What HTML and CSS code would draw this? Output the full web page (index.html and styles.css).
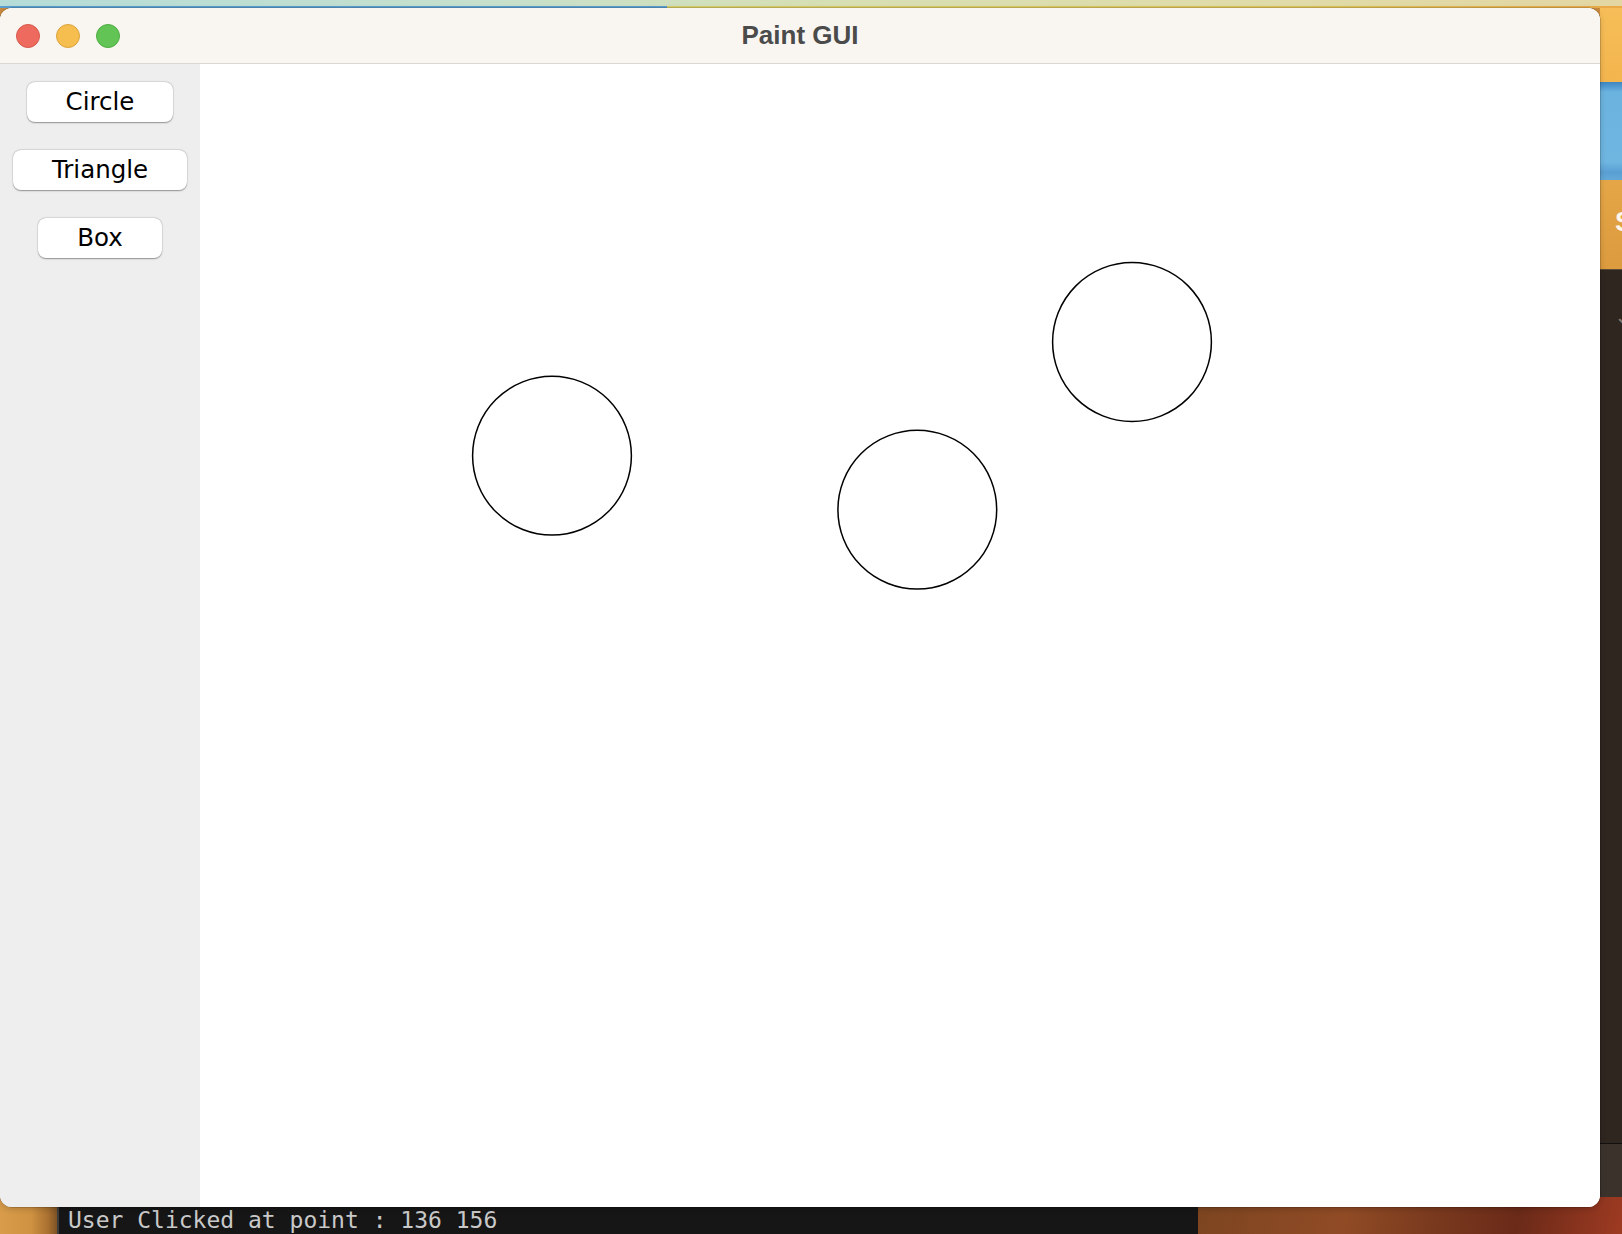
FILE: index.html
```html
<!DOCTYPE html>
<html>
<head>
<meta charset="utf-8">
<title>Paint GUI</title>
<link rel="stylesheet" href="styles.css">
</head>
<body>
<div class="desktop">
  <div class="top-strip">
    <div class="edge-blue"></div>
    <div class="edge-yellow"></div>
  </div>
  <div class="side-window">
    <div class="seg seg-yellow"></div>
    <div class="seg seg-blue"></div>
    <div class="seg seg-orange"><span class="cut-letter">S</span></div>
    <div class="seg seg-dark"><span class="cut-chev">&#8964;</span></div>
    <div class="seg seg-dark2"></div>
  </div>
  <div class="wall-left"></div>
  <div class="wall-right"></div>
  <div class="terminal">User Clicked at point : 136 156</div>

  <div class="window">
    <div class="titlebar">
      <div class="lights">
        <span class="light red"></span>
        <span class="light yellow"></span>
        <span class="light green"></span>
      </div>
      <div class="title">Paint GUI</div>
      <div></div>
    </div>
    <div class="content">
      <div class="sidebar">
        <button class="btn">Circle</button>
        <button class="btn">Triangle</button>
        <button class="btn">Box</button>
      </div>
      <div class="canvas">
        <svg class="drawing" width="1400" height="1143" viewBox="0 0 1400 1143">
          <circle cx="352" cy="391.7" r="79.4" />
          <circle cx="932" cy="278" r="79.4" />
          <circle cx="717.3" cy="445.7" r="79.4" />
        </svg>
      </div>
    </div>
  </div>
</div>
</body>
</html>
```

FILE: styles.css
```css
html, body {
  margin: 0;
  padding: 0;
}

body {
  font-family: "Liberation Sans", Arial, sans-serif;
  background: #c98a3e;
}

.desktop {
  position: relative;
  width: 1622px;
  height: 1234px;
  overflow: hidden;
  background: #c98a3e;
}

/* ---------- backdrop (other windows / wallpaper) ---------- */
.top-strip {
  position: absolute;
  left: 0;
  top: 0;
  width: 1622px;
  height: 8px;
  background: linear-gradient(90deg, #b5dcd8 0%, #c6e0cc 30%, #d6dfb4 50%, #dfdca9 75%, #e3d6a2 100%);
}

.edge-blue {
  position: absolute;
  left: 0;
  top: 6px;
  width: 667px;
  height: 2px;
  background: #5b9fcf;
}

.edge-yellow {
  position: absolute;
  left: 667px;
  top: 6px;
  width: 955px;
  height: 2px;
  background: linear-gradient(90deg, #d9cf6a 0%, #e0c45a 70%, #e9a949 100%);
}

.side-window {
  position: absolute;
  left: 1600px;
  top: 8px;
  width: 22px;
  height: 1189px;
  display: flex;
  flex-direction: column;
  overflow: hidden;
}

.seg {
  flex: none;
  overflow: hidden;
  position: relative;
}

.seg-yellow {
  height: 74px;
  background: linear-gradient(180deg, #f6be58 0%, #f3b54e 100%);
}

.seg-blue {
  height: 98px;
  background: linear-gradient(180deg, #3f86c2 0px, #4e97cf 4px, #6bb3df 10px, #6fb6e1 80px, #5a9fd2 90px, #63a8d8 98px);
}

.seg-orange {
  height: 89px;
  background: linear-gradient(180deg, #e4a647 0%, #dc9b3e 100%);
  border-bottom: 1px solid #5d4a38;
}

.cut-letter {
  position: absolute;
  left: 15px;
  top: 29px;
  font-family: "Liberation Sans", Arial, sans-serif;
  font-weight: bold;
  font-size: 27px;
  color: #fdf6ea;
  line-height: 1;
}

.cut-chev {
  position: absolute;
  left: 14px;
  top: 36px;
  font-size: 22px;
  color: #8a7d74;
  line-height: 1;
}

.seg-dark {
  height: 873px;
  background: #2f2620;
  border-bottom: 1px solid #121110;
}

.seg-dark2 {
  height: 53px;
  background: #3b322c;
}

.wall-left {
  position: absolute;
  left: 0;
  top: 1197px;
  width: 57px;
  height: 37px;
  background: linear-gradient(90deg, #d89c4a 0%, #cf9242 55%, #a86f30 85%, #7d5224 100%);
}

.wall-right {
  position: absolute;
  left: 1198px;
  top: 1197px;
  width: 424px;
  height: 37px;
  background: linear-gradient(100deg, #7c4520 0%, #904b25 35%, #7a3a1e 55%, #6a2a18 75%, #9e3a22 100%);
}

.terminal {
  position: absolute;
  left: 57px;
  top: 1207px;
  width: 1141px;
  height: 27px;
  box-sizing: border-box;
  background: #161616;
  border-left: 2px solid #3d3d3d;
  padding-left: 9px;
  font-family: "DejaVu Sans Mono", "Liberation Mono", monospace;
  font-size: 23px;
  line-height: 26px;
  color: #c9c9c9;
  white-space: pre;
}

/* ---------- the Paint GUI window ---------- */
.window {
  position: absolute;
  left: 0;
  top: 8px;
  width: 1600px;
  height: 1199px;
  border-radius: 12px;
  overflow: hidden;
  display: flex;
  flex-direction: column;
  background: #ffffff;
  box-shadow: 0 0 0 0.5px rgba(0, 0, 0, 0.28), 0 2px 6px rgba(0, 0, 0, 0.18);
}

.titlebar {
  flex: none;
  height: 55px;
  border-bottom: 1px solid #dad8d4;
  background: #f9f6f2;
  display: grid;
  grid-template-columns: 1fr auto 1fr;
  align-items: center;
}

.lights {
  display: flex;
  gap: 16px;
  padding-left: 16px;
}

.light {
  width: 24px;
  height: 24px;
  border-radius: 50%;
  box-sizing: border-box;
}

.light.red {
  background: #ee6a5e;
  border: 1px solid #d8584d;
}

.light.yellow {
  background: #f5be4f;
  border: 1px solid #dba43c;
}

.light.green {
  background: #61c454;
  border: 1px solid #4fad42;
}

.title {
  font-family: "Liberation Sans", Arial, sans-serif;
  font-weight: bold;
  font-size: 26px;
  color: #4b4b4b;
  line-height: 29px;
  margin-top: -1px;
}

.content {
  flex: 1;
  display: flex;
  min-height: 0;
}

.sidebar {
  flex: none;
  width: 200px;
  background: #eeeeee;
  display: flex;
  flex-direction: column;
  align-items: center;
  padding-top: 18px;
  gap: 28px;
  box-sizing: border-box;
}

.btn {
  height: 40px;
  padding: 0 39px;
  margin: 0;
  border: none;
  border-radius: 8px;
  background: #ffffff;
  box-shadow: 0 0.5px 1.5px rgba(0, 0, 0, 0.38), 0 0 0 0.5px rgba(0, 0, 0, 0.06);
  font-family: "DejaVu Sans", "Noto Sans", sans-serif;
  font-size: 24.5px;
  line-height: 28px;
  color: #000000;
  display: flex;
  align-items: center;
  justify-content: center;
}

.canvas {
  flex: 1;
  background: #ffffff;
  position: relative;
}

.drawing {
  display: block;
}

.drawing circle {
  fill: none;
  stroke: #000000;
  stroke-width: 1.5;
}
```
